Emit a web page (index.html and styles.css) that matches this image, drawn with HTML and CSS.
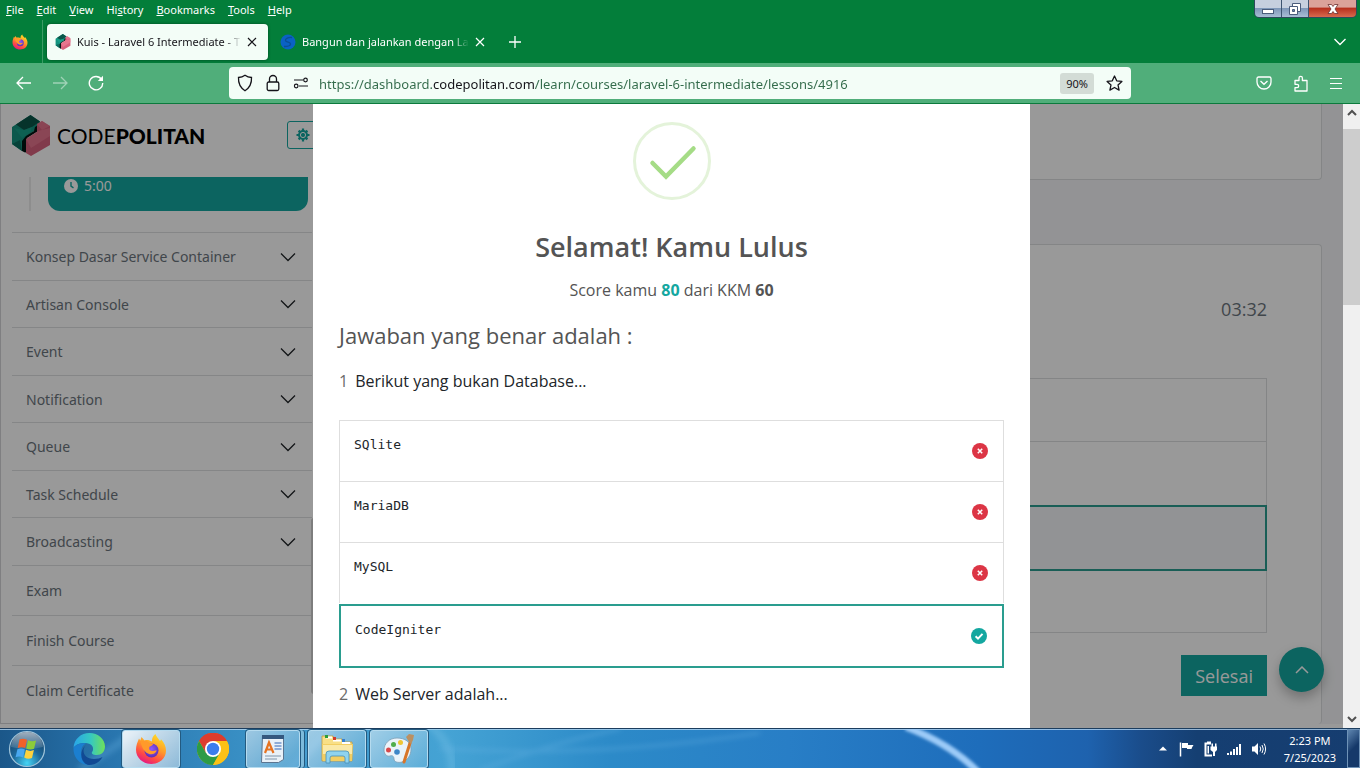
FILE: index.html
```html
<!DOCTYPE html>
<html lang="id">
<head>
<meta charset="utf-8">
<title>Kuis - Laravel 6 Intermediate</title>
<link rel="stylesheet" href="styles.css">
</head>
<body>
<svg class="defs" aria-hidden="true">
  <defs>
    <linearGradient id="ffBody" x1="0.8" y1="0" x2="0.3" y2="1"><stop offset="0" stop-color="#ffe226"/><stop offset=".45" stop-color="#ff9a2a"/><stop offset=".75" stop-color="#ff4a45"/><stop offset="1" stop-color="#e31587"/></linearGradient>
    <radialGradient id="ffGlobe" cx=".5" cy=".4" r=".6"><stop offset="0" stop-color="#9059ff"/><stop offset="1" stop-color="#5b2fb5"/></radialGradient>
    <linearGradient id="edgeTop" x1="0" y1="0" x2="1" y2="0"><stop offset="0" stop-color="#2aa5e8"/><stop offset=".55" stop-color="#36c9c0"/><stop offset="1" stop-color="#6fe05a"/></linearGradient>
    <radialGradient id="orbFill" cx=".5" cy=".9" r=".9"><stop offset="0" stop-color="#46d4f4"/><stop offset=".45" stop-color="#1d6a9c"/><stop offset="1" stop-color="#16395c"/></radialGradient>
    <linearGradient id="orbShine" x1="0" y1="0" x2="0" y2="1"><stop offset="0" stop-color="#fff" stop-opacity=".6"/><stop offset="1" stop-color="#fff" stop-opacity=".1"/></linearGradient>
    <symbol id="firefox" viewBox="0 0 32 32">
      <path fill="url(#ffBody)" d="M20.500 1C21 3.500 23.500 5.500 25 8c.6-.4.9-1 1-1.800 3 3.300 5 7 5 11.300C31 25.500 24.500 31 16.200 31 8 31 1 25 1 16.800 1 12.500 2.500 9 4 5.500l1.300 2L6.500 4l3 3.500c1.500-.5 3-.6 4.500-.3l3 1.300C16.800 5.500 18 2.500 20.500 1z"/>
      <circle cx="16.500" cy="17.500" r="7" fill="url(#ffGlobe)"/>
      <path fill="#ff9a2a" d="M5.500 8.500l4.500-.8c2 .2 3.500 1 4.500 2.300l3.800.8c-.6 1.800-2 2.200-3.800 2.900-.9 2.500.2 4 2.500 4.300 2 .2 3-1 4.800-.4-1 2.600-3.800 4.200-7 3.600-4.800-1-8.300-6.700-9.300-12.700z"/>
    </symbol>
    <symbol id="hexlogo" viewBox="0 0 38 41">
      <path fill="#14937f" d="M0 12L18.500 0 28 6.500V13l-6 3-8 6v8l-4 6-10-7z"/>
      <path fill="#0b5549" d="M4 9.500L18.500 0 28 6.500 20 12l-8 3z"/>
      <path fill="#1ba890" d="M2 13l10 2 8-3-2 6-8 5z" opacity=".6"/>
      <path fill="#0d6f60" d="M0 29l8-4 2 11z"/>
      <path fill="#001512" d="M10 36V26l4-5 8-5 1-4 5-3v6l-13 8v14l-2 .5z"/>
      <path fill="#d8617d" d="M14 24l11-7V9l5-3 8 5v19L19 41l-5-3z"/>
      <path fill="#ec7d96" d="M14 24l12-8 12-3v8L19 33z" opacity=".7"/>
      <path fill="#f08098" d="M25 9l5-3 8 5-8 4z" opacity=".6"/>
    </symbol>
    <symbol id="down" viewBox="0 0 16 10"><path d="M1 1.500l7 7 7-7" fill="none" stroke="currentColor" stroke-width="1.300"/></symbol>
    <symbol id="cross" viewBox="0 0 10 10"><path d="M1 1l8 8M9 1l-8 8" fill="none" stroke="currentColor" stroke-width="1.200"/></symbol>
    <symbol id="wrong" viewBox="0 0 16 16"><circle cx="8" cy="8" r="8" fill="#dc3545"/><path d="M5.800 5.800l4.400 4.400m0-4.400l-4.400 4.400" stroke="#fff" stroke-width="1.600"/></symbol>
    <symbol id="right" viewBox="0 0 16 16"><circle cx="8" cy="8" r="8" fill="#14a7a0"/><path d="M4.600 8.300l2.400 2.300 4.500-4.700" fill="none" stroke="#fff" stroke-width="2"/></symbol>
  </defs>
</svg>

<header class="browser">
  <div class="menurow">
    <nav class="menu">
      <button><u>F</u>ile</button><button><u>E</u>dit</button><button><u>V</u>iew</button><button>Hi<u>s</u>tory</button><button><u>B</u>ookmarks</button><button><u>T</u>ools</button><button><u>H</u>elp</button>
    </nav>
    <div class="winctl">
      <button class="win" aria-label="Minimize"><svg width="14" height="14" viewBox="0 0 14 14"><rect x="1.500" y="7.500" width="11" height="4" fill="#fff" stroke="#4a5d7c"/></svg></button>
      <button class="win" aria-label="Restore"><svg width="14" height="14" viewBox="0 0 14 14"><path d="M4.500 1.500h8v8h-8z" fill="#fff" stroke="#4a5d7c"/><path d="M1.500 4.500h8v8h-8z" fill="#fff" stroke="#4a5d7c"/><path d="M4.500 7.500h2v2h-2z" fill="#6d86ac" stroke="#4a5d7c"/></svg></button>
      <button class="win win-close" aria-label="Close window"><svg width="14" height="14" viewBox="0 0 14 14"><path d="M2 2.500h3.500L7 4.500l1.500-2H12L9 7l3 4.500H8.500L7 9.500l-1.500 2H2L5 7z" fill="#fff" stroke="#6b3030" stroke-width=".8"/></svg></button>
    </div>
  </div>

  <div class="tabs">
    <button class="pinned" aria-label="Firefox"><svg width="16" height="16"><use href="#firefox"/></svg></button>
    <div class="tab tab-active">
      <svg width="16" height="16"><use href="#hexlogo"/></svg>
      <span class="tab-title">Kuis - Laravel 6 Intermediate - T</span>
      <button class="tab-close" aria-label="Close tab"><svg width="10" height="10"><use href="#cross"/></svg></button>
    </div>
    <div class="tab">
      <svg width="16" height="16" viewBox="0 0 16 16"><circle cx="8" cy="8" r="7.500" fill="#0a62c4"/><path d="M12 3.500C8.500 3 5 4.500 5.500 6.500S10.500 8 10.500 10 7 12.500 4 12.500" fill="none" stroke="#0a4f96" stroke-width="1.300"/></svg>
      <span class="tab-title">Bangun dan jalankan dengan La</span>
      <button class="tab-close" aria-label="Close tab"><svg width="10" height="10"><use href="#cross"/></svg></button>
    </div>
    <button class="newtab" aria-label="New tab"><svg width="12" height="12" viewBox="0 0 12 12"><path d="M6 0v12M0 6h12" stroke="currentColor" stroke-width="1.300"/></svg></button>
    <button class="alltabs" aria-label="List all tabs"><svg width="12" height="8" viewBox="0 0 12 8"><path d="M.5 1L6 6.500 11.500 1" fill="none" stroke="currentColor" stroke-width="1.400"/></svg></button>
  </div>

  <div class="toolbar">
    <div class="navs">
      <button aria-label="Back"><svg width="16" height="16" viewBox="0 0 16 16"><path d="M15 8H1.500M7 2L1 8l6 6" fill="none" stroke="currentColor" stroke-width="1.300"/></svg></button>
      <button aria-label="Forward" class="dim"><svg width="16" height="16" viewBox="0 0 16 16"><path d="M1 8h13.500M9 2l6 6-6 6" fill="none" stroke="currentColor" stroke-width="1.300"/></svg></button>
      <button aria-label="Reload"><svg width="16" height="16" viewBox="0 0 16 16"><path d="M13.500 4.300A6.700 6.700 0 1 0 14.700 8" fill="none" stroke="currentColor" stroke-width="1.400"/><path d="M15 .8V6H9.800z" fill="currentColor"/></svg></button>
    </div>
    <div class="urlbar">
      <svg width="16" height="18" viewBox="0 0 16 18"><path d="M8 1.200c2 1.500 4 2.200 6.500 2.300.3 5.500-1.500 10-6.500 13.200C3 13.500 1.200 9 1.500 3.500 4 3.400 6 2.700 8 1.200z" fill="none" stroke="#15141a" stroke-width="1.300"/></svg>
      <svg width="16" height="18" viewBox="0 0 16 18"><rect x="2.200" y="8" width="11.600" height="8.500" rx="1.500" fill="none" stroke="#15141a" stroke-width="1.300"/><path d="M4.500 8V5a3.500 3.500 0 0 1 7 0v3" fill="none" stroke="#15141a" stroke-width="1.300"/></svg>
      <svg width="16" height="12" viewBox="0 0 16 12"><path d="M1 3h9M6 9h9" stroke="#15141a" stroke-width="1.200"/><circle cx="12.500" cy="3" r="1.800" fill="none" stroke="#15141a" stroke-width="1.200"/><circle cx="3.200" cy="9" r="1.800" fill="none" stroke="#15141a" stroke-width="1.200"/></svg>
      <input class="url" type="text" aria-label="Address" value="https://dashboard.codepolitan.com/learn/courses/laravel-6-intermediate/lessons/4916">
      <button class="zoom">90%</button>
      <button class="star" aria-label="Bookmark this page"><svg width="17" height="16" viewBox="0 0 17 16"><path d="M8.500 1l2.200 4.800 5.200.6-3.900 3.500 1.100 5.200-4.600-2.600-4.600 2.600L5 9.900 1.100 6.400l5.200-.6z" fill="none" stroke="#15141a" stroke-width="1.300" stroke-linejoin="round"/></svg></button>
    </div>
    <div class="tools">
      <button aria-label="Pocket"><svg width="16" height="14" viewBox="0 0 16 14"><path d="M2.500 1h11A1.500 1.500 0 0 1 15 2.500V6A7 7 0 0 1 1 6V2.500A1.500 1.500 0 0 1 2.500 1z" fill="none" stroke="currentColor" stroke-width="1.300"/><path d="M4.500 5L8 8.300 11.500 5" fill="none" stroke="currentColor" stroke-width="1.300"/></svg></button>
      <button aria-label="Extensions"><svg width="16" height="17" viewBox="0 0 16 17"><path d="M2 5.500h4V3a1.700 1.700 0 0 1 3.400 0v2.500H14V16H2v-3.300h2a1.700 1.700 0 0 0 0-3.400H2z" fill="none" stroke="currentColor" stroke-width="1.300" stroke-linejoin="round"/></svg></button>
      <button aria-label="Application menu"><svg width="12" height="12" viewBox="0 0 12 12"><path d="M0 1.500h12M0 6.500h12M0 11.500h12" stroke="currentColor" stroke-width="1"/></svg></button>
    </div>
  </div>
</header>

<div class="viewport">
  <div class="stage">
    <div class="page">
      <aside class="sidebar">
        <div class="brandbar">
          <svg width="38" height="41"><use href="#hexlogo"/></svg>
          <span class="brand">CODE<b>POLITAN</b></span>
          <button class="theme" aria-label="Theme"><svg width="14" height="14" viewBox="0 0 14 14"><g stroke="#14a7a0" stroke-width="2.200"><path d="M7 .5v13M.5 7h13M2.600 2.600l8.800 8.800M11.400 2.600l-8.800 8.800"/></g><circle cx="7" cy="7" r="4.900" fill="#14a7a0"/><circle cx="7" cy="7" r="2.600" fill="none" stroke="#fff" stroke-width="1"/></svg></button>
        </div>
        <div class="current">
          <div class="lesson"><svg width="14" height="14" viewBox="0 0 14 14"><circle cx="7" cy="7" r="7" fill="#fff"/><path d="M7 3v4.200l2.500 1.600" fill="none" stroke="#14a7a0" stroke-width="1.400"/></svg>5:00</div>
        </div>
        <div class="sections">
          <button class="section">Konsep Dasar Service Container<svg width="16" height="10"><use href="#down"/></svg></button>
          <button class="section">Artisan Console<svg width="16" height="10"><use href="#down"/></svg></button>
          <button class="section">Event<svg width="16" height="10"><use href="#down"/></svg></button>
          <button class="section">Notification<svg width="16" height="10"><use href="#down"/></svg></button>
          <button class="section">Queue<svg width="16" height="10"><use href="#down"/></svg></button>
          <button class="section">Task Schedule<svg width="16" height="10"><use href="#down"/></svg></button>
          <button class="section">Broadcasting<svg width="16" height="10"><use href="#down"/></svg></button>
          <a class="section final" href="#exam">Exam</a>
          <a class="section final" href="#finish">Finish Course</a>
          <a class="section final" href="#claim">Claim Certificate</a>
        </div>
        <div class="sidethumb"></div>
      </aside>
      <main class="main">
        <section class="card card-top"></section>
        <section class="card card-quiz">
          <div class="timer">03:32</div>
          <div class="choices">
            <div class="choice"></div><div class="choice"></div><div class="choice chosen"></div><div class="choice"></div>
          </div>
          <div class="actions"><button class="finish">Selesai</button></div>
        </section>
        <button class="totop" aria-label="Back to top"><svg width="14" height="8" viewBox="0 0 14 8"><path d="M1 7l6-6 6 6" fill="none" stroke="#fff" stroke-width="1.500"/></svg></button>
      </main>
    </div>

    <div class="overlay">
      <div class="modal" role="dialog" aria-labelledby="result">
        <svg class="success" width="78" height="78" viewBox="0 0 78 78"><circle cx="39" cy="39" r="37.500" fill="none" stroke="#e4f3da" stroke-width="3"/><path d="M19.500 41L33 54.500l27.500-28" fill="none" stroke="#a5dc86" stroke-width="4.500" stroke-linecap="round"/></svg>
        <h2 class="title" id="result">Selamat! Kamu Lulus</h2>
        <p class="score">Score kamu <b class="mark">80</b> dari KKM <b>60</b></p>
        <h3 class="subtitle">Jawaban yang benar adalah :</h3>
        <p class="question"><span class="num">1</span>Berikut yang bukan Database...</p>
        <ul class="answers">
          <li class="answer"><code>SQlite</code><svg width="16" height="16"><use href="#wrong"/></svg></li>
          <li class="answer"><code>MariaDB</code><svg width="16" height="16"><use href="#wrong"/></svg></li>
          <li class="answer"><code>MySQL</code><svg width="16" height="16"><use href="#wrong"/></svg></li>
          <li class="answer correct"><code>CodeIgniter</code><svg width="16" height="16"><use href="#right"/></svg></li>
        </ul>
        <p class="question"><span class="num">2</span>Web Server adalah...</p>
      </div>
    </div>
  </div>
  <div class="scroll">
    <svg width="10" height="7" viewBox="0 0 10 7"><path d="M1 6l4-4 4 4" fill="none" stroke="#505050" stroke-width="2"/></svg>
    <div class="track"><div class="thumb"></div></div>
    <svg width="10" height="7" viewBox="0 0 10 7"><path d="M1 1l4 4 4-4" fill="none" stroke="#505050" stroke-width="2"/></svg>
  </div>
</div>

<footer class="taskbar">
  <svg class="glow" viewBox="0 0 1360 40" preserveAspectRatio="none" aria-hidden="true">
    <defs><filter id="soft"><feGaussianBlur stdDeviation="1.500"/></filter><filter id="softer"><feGaussianBlur stdDeviation="3"/></filter></defs>
    <path d="M906 -2Q950 15 978 44" fill="none" stroke="#9ccbf8" stroke-width="7" filter="url(#soft)"/>
    <path d="M430 -4Q455 18 452 46" fill="none" stroke="#7cc4e8" stroke-width="8" opacity=".35" filter="url(#softer)"/>
    <path d="M480 42Q560 12 620 0M440 20Q600 30 760 4" fill="none" stroke="#6bb4e4" stroke-width="4" opacity=".3" filter="url(#softer)"/>
    <path d="M80 42L140 0M290 42L330 0" fill="none" stroke="#6bb4e4" stroke-width="8" opacity=".3" filter="url(#softer)"/>
  </svg>
  <button class="start" aria-label="Start"><svg width="38" height="38" viewBox="0 0 38 38">
    <circle cx="19" cy="19" r="17.500" fill="url(#orbFill)" stroke="#9fc4da" stroke-width="1.200"/>
    <path d="M3 17a16 15 0 0 1 32 0Q19 21 3 17z" fill="url(#orbShine)"/>
    <path d="M11.500 9.500q3.500-1.500 7.500.3l-1.800 8.300q-3.500-1.600-7.500 0z" fill="#f0612a"/>
    <path d="M20 10.200q4 2 8 .3l-1.900 8.300q-4 1.500-7.900-.4z" fill="#8ccb3a"/>
    <path d="M9.400 19.200q3.700-1.500 7.500.2l-1.800 8q-3.700-1.700-7.500-.2z" fill="#49a8f0"/>
    <path d="M18 19.800q4 2 7.900.3l-1.900 8q-4 1.600-7.800-.5z" fill="#fdd23e"/>
  </svg></button>
  <button class="task plain" aria-label="Edge"><svg width="32" height="32" viewBox="0 0 32 32">
    <path fill="url(#edgeTop)" d="M.5 15C1 6 8 0 16.500 0 25 0 32 6 32 13.500c0 5-3.500 8.500-8.300 8.500-4 0-5.700-1.700-4.500-3.300 2-2.700.8-7.700-5-8.500C8 9.500 2.500 11.500.5 15z"/>
    <path fill="#1b7fd0" d="M.5 15C3 10.500 8.500 9.500 13 10.500c-4.500 2-6 7.500-3.500 13 1.800 4 5.200 7 10 8-10 2.500-19.500-5-19-16.500z"/>
    <path fill="#114a94" d="M13 12c-5 5-2.500 14 8 14 3.300 0 6.500-.8 8.500-2-2.500 5-7.500 8-13.500 8C8.500 31.500 4.500 19 13 12z"/>
  </svg></button>
  <button class="task running focus" aria-label="Firefox"><svg width="32" height="32"><use href="#firefox"/></svg></button>
  <button class="task plain" aria-label="Chrome"><svg width="32" height="32" viewBox="0 0 32 32">
    <circle cx="16" cy="16" r="16" fill="#fbc116"/>
    <path fill="#dc3c2e" d="M2.100 8A16 16 0 0 1 29.900 8H16z"/>
    <path fill="#dc3c2e" d="M2.100 8L9 20l7-4 0-8h13.900A16 16 0 0 0 2.100 8z"/>
    <path fill="#2d9b46" d="M2.100 8A16 16 0 0 0 16 32l6.900-12L16 16 9 20z"/>
    <path fill="#fbc116" d="M29.900 8A16 16 0 0 1 16 32l7-12V8z"/>
    <circle cx="16" cy="16" r="8" fill="#fff"/><circle cx="16" cy="16" r="6.200" fill="#3b7ded"/>
  </svg></button>
  <button class="task running stack" aria-label="WordPad"><svg width="26" height="30" viewBox="0 0 26 30">
    <path fill="#e9f1f8" stroke="#5b7590" d="M2.500 1.500h21v24l-5 3h-17z"/><path fill="#35587e" d="M2 1h22v4H2z"/>
    <path fill="none" stroke="#e77320" stroke-width="2.200" d="M5 19L9 8.500 13.500 19M6.500 15.500h6"/><path stroke="#3467b5" d="M14.500 9h7M14.500 12h7M14.500 15h7"/><path stroke="#8095aa" d="M5 22h16M5 25h12"/>
  </svg></button>
  <button class="task running" aria-label="Explorer"><svg width="32" height="32" viewBox="0 0 32 32">
    <path fill="#f8df86" stroke="#bf9940" stroke-width=".8" d="M1 3h11l1 3h8l1 3h9v19H1z"/><path fill="#fff" d="M5 3.500h6v2H5zM12 6.500h8v2h-8zM21 9h8v2h-8z"/>
    <path fill="#2a9d3a" d="M4 2h3v3H4z"/><path fill="#d23a2a" d="M12 4h3v3h-3z"/><path fill="#3780d0" d="M21 6h3v3h-3z"/>
    <path fill="#f2ce62" d="M1 11h31l-1 17H2z"/><path fill="#fae9a8" d="M2 12h29v9H2z"/>
    <path fill="#8fd3ef" stroke="#468fb7" stroke-width=".8" d="M5 30V21q0-3 3-3h17q3 0 3 3v9h-4v-5q0-2-2-2H11q-2 0-2 2v5z"/>
  </svg></button>
  <button class="task running" aria-label="Paint"><svg width="32" height="32" viewBox="0 0 32 32">
    <path fill="#eaf3fa" stroke="#7e9db4" stroke-width=".8" d="M14 5C6 5 1 11 1 17c0 4 3 7 6 6 2-1 4 0 4 3 0 3 4 4 8 3 6-2 9-7 9-13C28 9 22 5 14 5z"/>
    <circle cx="5.500" cy="17" r="2.500" fill="#d9484a"/><circle cx="10.500" cy="11.500" r="2.500" fill="#50ad4c"/><circle cx="17.500" cy="9.500" r="2.500" fill="#efc636"/><circle cx="14" cy="19" r="2.800" fill="#3d86c8"/>
    <path d="M21 29L27 10" stroke="#d8762a" stroke-width="3" stroke-linecap="round"/><path d="M26 9l-3-5 3-3 5 1-1 5-2 4z" fill="#bb9062"/>
  </svg></button>
  <div class="tray">
    <svg width="8" height="5" viewBox="0 0 8 5"><path d="M0 4.500L4 .5l4 4z" fill="#fff"/></svg>
    <svg width="16" height="16" viewBox="0 0 16 16"><path d="M1.500 1.500v14" stroke="#fff" stroke-width="1.500"/><path d="M3 2h6v2h5.500L13 6.500 12.500 8H8V7H3z" fill="#fff"/></svg>
    <svg width="16" height="16" viewBox="0 0 16 16"><path d="M8 2.500H2.500v12H9" fill="none" stroke="#fff" stroke-width="2"/><path d="M4.500 5H6v7.500H4.500zM4 .500h4v2H4z" fill="#fff"/><path d="M7.500 5.500H14V9l-2 2v4h-2v-4l-2.500-2zM8.500 2.500H10V6H8.500zM12 2.500h1.500V6H12z" fill="#fff"/></svg>
    <svg width="16" height="14" viewBox="0 0 16 14"><path d="M0 11h2v2H0zM3 9.500h2V13H3zM6 7h2v6H6zM9 5h2v8H9zM12 2h2v11h-2z" fill="#fff"/></svg>
    <svg width="16" height="16" viewBox="0 0 16 16"><path d="M1 5.500h2.500L7 2v12l-3.500-3.500H1z" fill="#fff"/><path d="M9 5.500q1.500 2.500 0 5M11 4q2.500 4 0 8M13 2.500q3.200 5.500 0 11" fill="none" stroke="#fff" stroke-width="1"/></svg>
    <time class="clock"><span>2:23 PM</span><span>7/25/2023</span></time>
    <button class="desktop" aria-label="Show desktop"></button>
  </div>
</footer>
</body>
</html>
```
FILE: styles.css
```css
* { box-sizing: border-box; }
body {
  margin: 0;
  height: 100vh;
  display: flex;
  flex-direction: column;
  overflow: hidden;
  font-family: "Open Sans", "Noto Sans", sans-serif;
  background: #fff;
}
button { font: inherit; color: inherit; background: none; border: 0; padding: 0; margin: 0; }
svg { display: block; flex: none; }
h2, h3, p, ul { margin: 0; padding: 0; }
.defs { position: absolute; width: 0; height: 0; }

/* Browser chrome */
.browser { flex: none; background: #037e3a; color: #fff; font-family: "Noto Sans", "Open Sans", sans-serif; border-bottom: 1px solid #0b7a3c; }
.menurow { height: 20px; display: flex; justify-content: space-between; }
.menu { display: flex; gap: 13px; padding-left: 6px; font-size: 11px; line-height: 20px; }
.winctl { display: flex; height: 18px; margin-right: 3px; border: 1px solid #2d4a5c; border-top: 0; border-radius: 0 0 5px 5px; overflow: hidden; }
.win { width: 27px; display: flex; align-items: center; justify-content: center; background: linear-gradient(#c6d0df 45%, #7f98b9 50%, #a9bdd5); border-right: 1px solid #3c5470; }
.win-close { width: 47px; background: linear-gradient(#dba29a 40%, #b8311f 50%, #d76a4e); border-right: 0; }
.tabs { height: 43px; display: flex; align-items: center; font-size: 11px; }
.pinned { width: 43px; height: 43px; padding-left: 12px; border-right: 1px solid #3d9b66; margin-right: 4px; }
.tab { width: 221px; height: 36px; margin-right: 4px; padding: 0 11px 0 8px; display: flex; align-items: center; gap: 6px; border-radius: 4px; }
.tab-active { background: #f3fdf7; color: #15141a; box-shadow: 0 0 3px #02461f; }
.tab-title { flex: 1; white-space: nowrap; mask-image: linear-gradient(90deg, #000 90%, transparent); }
.newtab { padding: 10px; margin-left: 2px; }
.alltabs { margin-left: auto; padding-right: 14px; }
.toolbar { height: 40px; background: #50ae7a; display: grid; grid-template-columns: 229px 1fr 229px; align-items: center; }
.navs { display: flex; gap: 20px; padding-left: 16px; }
.dim { opacity: .45; }
.urlbar { height: 32px; background: #f3fdf7; border-radius: 4px; display: flex; align-items: center; gap: 12px; padding: 0 8px; }
.url {
  flex: 1; min-width: 0; padding: 1px 0 0; border: 0; outline: 0;
  font: 13px "Noto Sans", "Open Sans", sans-serif;
  color: transparent;
  background: linear-gradient(90deg, #336b4b 113px, #15141a 113px, #15141a 215px, #336b4b 215px);
  background-clip: text;
  margin-left: -2px;
}
.zoom { height: 21px; padding: 0 6px; border-radius: 3px; background: #d3dcd6; color: #15141a; font-size: 11px; }
.tools { display: flex; justify-content: flex-end; align-items: center; gap: 21px; padding-right: 18px; }

/* Browser viewport */
.viewport { flex: 1; min-height: 0; display: flex; }
.stage { flex: 1; position: relative; overflow: hidden; padding-bottom: 4px; background: #fff; }
.page { height: 100%; display: flex; overflow: hidden; background: #f5f6f8; }
.sidebar { position: relative; flex: none; width: 340px; background: #fff; border: 1px solid #d4d4d8; border-top: 0; font-family: "Noto Sans", "Open Sans", sans-serif; }
.brandbar { height: 73px; display: flex; align-items: center; padding: 0 0 11px 11px; gap: 7px; }
.brand { font: 21px Lato, sans-serif; color: #000; }
.brand b { font-weight: 900; }
.theme { width: 44px; height: 28px; margin-left: auto; margin-right: 8px; padding-left: 8px; border: 1px solid #14a7a0; border-radius: 3px; }
.current { height: 34px; margin: 0 0 21px 28px; padding-left: 17px; border-left: 2px solid #ececec; }
.lesson { width: 260px; height: 34px; padding-left: 16px; display: flex; gap: 6px; background: #14a7a0; color: #fff; border-radius: 0 0 12px 12px; font-size: 14px; line-height: 18px; }
.lesson svg { margin-top: 2px; }
.sections { width: 300px; margin-left: 11px; }
.section {
  width: 100%; height: 48px; padding: 0 16px 0 14px;
  display: flex; align-items: center; justify-content: space-between;
  border-top: 1px solid #dee0e2; color: #6c757d; font-size: 14px; text-align: left; text-decoration: none;
}
.section:nth-child(even) { height: 47px; }
.section svg { color: #212529; }
.section.final { height: 50px; }
.sidethumb { position: absolute; left: 310px; bottom: 29px; width: 6px; height: 176px; background: #d0d0d0; border-radius: 3px; }
.main { position: relative; flex: 1; padding: 0 21px 0 24px; display: flex; flex-direction: column; gap: 64px; }
.card { background: #fff; border: 1px solid #dcdee0; border-radius: 4px; }
.card-top { flex: none; height: 76px; border-top: 0; border-radius: 0 0 4px 4px; }
.card-quiz { flex: 1; padding: 49px 54px 0; border-bottom: 0; }
.timer { text-align: right; font-size: 18px; line-height: 30px; color: #6c757d; font-weight: 500; margin-bottom: 54px; }
.choices { border: 1px solid #dcdee0; border-top: 0; }
.choice { height: 63px; border-top: 1px solid #dcdee0; }
.chosen { height: 66px; border: 2px solid #2a9d8f; margin: 1px -1px 0; background: #f4f6f8; }
.chosen + .choice { height: 61px; border-top: 0; }
.actions { display: flex; justify-content: flex-end; padding-top: 22px; }
.finish { height: 41px; padding: 0 14px; background: #14a7a0; color: #fff; font-size: 18px; }
.totop { position: absolute; right: 19px; bottom: 32px; width: 45px; height: 45px; border-radius: 50%; background: #14a7a0; display: flex; align-items: center; justify-content: center; box-shadow: 0 6px 12px rgba(0, 0, 0, .25); }

/* Result dialog */
.overlay { position: absolute; inset: 0; display: flex; justify-content: center; background: rgba(0, 0, 0, .4); overflow: hidden; }
.modal { width: 100%; max-width: 717px; padding: 18px 26px 0; background: #fff; color: #545454; font-size: 16px; line-height: 24px; }
.success { margin: 0 auto 27px; }
.title { text-align: center; font-size: 27px; font-weight: 600; line-height: 40px; margin-bottom: 11px; }
.score { text-align: center; margin-bottom: 17px; }
.mark { color: #14a7a0; }
.subtitle { font-size: 22px; font-weight: 400; line-height: 32px; margin-bottom: 18px; }
.question { color: #212529; }
.num { color: #6b6b6b; margin-right: 7px; }
.answers { list-style: none; margin: 27px 0 14px; }
.answer { height: 61px; padding: 0 15px 0 14px; border: 1px solid #dedede; border-bottom: 0; display: flex; align-items: center; justify-content: space-between; }
.answer code { font: 13px "DejaVu Sans Mono", monospace; color: #212529; padding-bottom: 13px; }
.correct { height: 64px; border: 2px solid #2a9d8f; margin-top: 1px; }

/* Page scrollbar */
.scroll { width: 17px; background: #f0f0f0; display: flex; flex-direction: column; align-items: center; padding: 5px 0; }
.track { flex: 1; width: 100%; padding-top: 13px; }
.thumb { height: 30%; background: #cdcdcd; }

/* Windows taskbar */
.taskbar {
  position: relative; flex: none; height: 40px; display: flex; align-items: center; padding-left: 8px; color: #fff;
  font-family: "Noto Sans", "Open Sans", sans-serif;
  border-top: 1px solid #1c3d5e;
  box-shadow: inset 0 1px 0 rgba(190, 220, 245, .75);
  background: linear-gradient(90deg, #1b5789, #2874ad 8%, #3c95c9 20%, #45a3d4 33%, #2c8ac8 45%, #287ec6 58%, #1e6dbb 72%, #1e62ae 80%, #1a4c8a 84%, #153f72 88%, #163d70);
}
.glow { position: absolute; inset: 0; width: 100%; height: 100%; }
.start, .task, .tray { position: relative; }
.start { margin-right: 19px; }
.task { width: 58px; height: 38px; margin-right: 4px; display: flex; align-items: center; justify-content: center; }
.plain { width: 48px; margin-right: 9px; }
.running { border: 1px solid #b5dbef; border-radius: 3px; background: linear-gradient(135deg, rgba(255, 255, 255, .5), rgba(255, 255, 255, .12)); box-shadow: 0 0 0 1px #235a80; }
.focus { background: linear-gradient(135deg, rgba(255, 255, 255, .9), rgba(255, 255, 255, .45)); margin-right: 9px; }
.stack { width: 54px; margin-right: 8px; box-shadow: 0 0 0 1px #235a80, 4px 0 0 0 #7dbbdc, 5px 0 0 0 #235a80; }
.tray { margin-left: auto; height: 100%; display: flex; align-items: center; gap: 8px; }
.tray > svg:first-child { margin-right: 4px; }
.clock { display: flex; flex-direction: column; align-items: center; margin: 0 3px 0 9px; font-size: 11px; line-height: 17px; }
.desktop { width: 13px; height: 39px; border: 1px solid #6f93b8; background: linear-gradient(135deg, #5f86b0, #15396a 50%); }
```
